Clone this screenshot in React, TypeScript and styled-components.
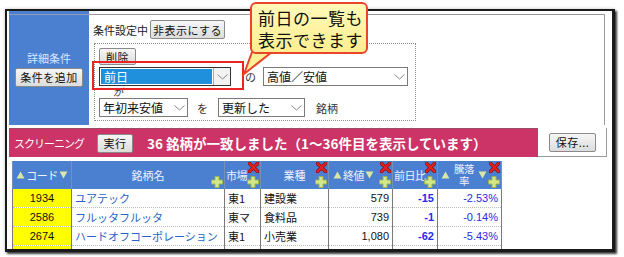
import React from "react";
import styled, { createGlobalStyle } from "styled-components";

const Global = createGlobalStyle`
  html, body { margin: 0; padding: 0; background: #ffffff; }
  body { font-family: "Noto Sans CJK JP", "Noto Sans", sans-serif; }
`;

const JP = `"Noto Sans CJK JP", "Noto Sans", sans-serif`;
const NUM = `"Liberation Sans", Arial, sans-serif`;

const Page = styled.div`
  position: relative;
  width: 624px;
  height: 257px;
  overflow: hidden;
  padding: 9px 0 0 5px;
  box-sizing: border-box;
`;

const Frame = styled.div`
  width: 610px;
  height: 243px;
  box-sizing: border-box;
  border: 2px solid #1a1a1a;
  border-right-width: 3px;
  border-bottom-width: 3px;
  box-shadow: 2px 2px 2px rgba(0, 0, 0, 0.75), 0 0 3px rgba(0, 0, 0, 0.25);
  background: #fff;
  overflow: hidden;
  padding: 0 0 0 2px;
`;

const TopSection = styled.div`
  display: flex;
  width: 596px;
  height: 114px;
`;

const SidePanel = styled.div`
  width: 80px;
  background: linear-gradient(#4b7fd0 0 3px, #8c9ab4 3px 4px, #4b7fd0 4px);
  display: flex;
  flex-direction: column;
  align-items: center;
  justify-content: center;
  box-sizing: border-box;
  gap: 2px;
`;

const SideLabel = styled.div`
  color: #d6e6ff;
  font-size: 11px;
  line-height: 16px;
  font-family: ${JP};
`;

const Button = styled.button<{ $w?: number; $h?: number }>`
  display: inline-flex;
  align-items: center;
  justify-content: center;
  height: ${(p) => p.$h || 19}px;
  ${(p) => (p.$w ? `width: ${p.$w}px;` : "")}
  padding: 0;
  box-sizing: border-box;
  border: 1px solid #8a8a8a;
  border-radius: 2px;
  background: linear-gradient(#f6f6f6, #dcdcdc);
  font-family: ${JP};
  font-size: 11px;
  line-height: 14px;
  color: #111;
  letter-spacing: 0.5px;
  white-space: nowrap;
  flex: none;
`;

const MainCell = styled.div`
  flex: 1;
  margin-top: 3px;
  border-top: 1px solid #9a9a9a;
  border-right: 1px solid #9a9a9a;
  padding: 5px 0 0 4px;
  box-sizing: border-box;
  display: flex;
  flex-direction: column;
  align-items: flex-start;
`;

const StatusRow = styled.div`
  display: flex;
  align-items: center;
  gap: 2px;
  height: 19px;
  font-size: 11px;
  color: #222;
  font-family: ${JP};
`;

const ConditionBox = styled.div`
  margin: 4px 0 0 1px;
  width: 322px;
  height: 78px;
  box-sizing: border-box;
  border: 1px dotted #8c8c8c;
  padding: 4px 0 0 4px;
  display: flex;
  flex-direction: column;
  align-items: flex-start;
`;

const SelRow = styled.div<{ $mt: number }>`
  display: flex;
  align-items: center;
  margin-top: ${(p) => p.$mt}px;
`;

const Particle = styled.span<{ $ml: number; $mr: number }>`
  font-size: 11px;
  line-height: 14px;
  color: #333;
  margin: 0 ${(p) => p.$mr}px 0 ${(p) => p.$ml}px;
  font-family: ${JP};
`;

const SmallGa = styled.div`
  font-size: 10px;
  line-height: 10px;
  height: 10px;
  margin: 1px 0 1px 14px;
  color: #333;
  font-style: italic;
  font-family: ${JP};
`;

const SelectBox = styled.div<{ $w: number; $hl?: boolean }>`
  width: ${(p) => p.$w}px;
  height: 19px;
  box-sizing: border-box;
  border: 1px solid ${(p) => (p.$hl ? "#333" : "#7a7a7a")};
  background: #fff;
  display: flex;
  align-items: stretch;
  font-family: ${JP};
  font-size: 12px;
  color: #111;
  flex: none;
`;

const SelectText = styled.div<{ $hl?: boolean }>`
  flex: 1;
  padding-left: 3px;
  background: ${(p) => (p.$hl ? "#1e90dc" : "transparent")};
  color: ${(p) => (p.$hl ? "#fff" : "#111")};
  margin: ${(p) => (p.$hl ? "1px" : "0")};
  line-height: ${(p) => (p.$hl ? "15px" : "17px")};
  white-space: nowrap;
`;

const SelectArrow = styled.div<{ $hl?: boolean }>`
  width: 16px;
  display: flex;
  align-items: center;
  justify-content: center;
  ${(p) => (p.$hl ? "border-left: 1px solid #aaa; background: #f2f2f2;" : "")}
`;

const Chevron = () => (
  <svg width="11" height="6" viewBox="0 0 11 6">
    <path d="M0.5 0.5 L5.5 5 L10.5 0.5" fill="none" stroke="#888" strokeWidth="1" />
  </svg>
);

const Select = ({ w, text, hl }: { w: number; text: string; hl?: boolean }) => (
  <SelectBox $w={w} $hl={hl}>
    <SelectText $hl={hl}>{text}</SelectText>
    <SelectArrow $hl={hl}>
      <Chevron />
    </SelectArrow>
  </SelectBox>
);

const BarRow = styled.div`
  display: flex;
  width: 598px;
  height: 29px;
  margin-top: 3px;
`;

const PinkBar = styled.div`
  width: 529px;
  background: #cc3366;
  border-top: 1px solid #9a4a6a;
  box-sizing: border-box;
  display: flex;
  align-items: center;
  padding-left: 5px;
`;

const PinkLabel = styled.span`
  color: #fff;
  font-size: 11px;
  letter-spacing: -1px;
  font-family: ${JP};
  width: 83px;
  white-space: nowrap;
`;

const Message = styled.span`
  color: #fff;
  font-size: 13.5px;
  font-weight: bold;
  font-family: ${JP};
  margin-left: 14px;
  white-space: nowrap;
`;

const SaveArea = styled.div`
  flex: 1;
  border-right: 1px solid #9a9a9a;
  border-bottom: 1px solid #9a9a9a;
  display: flex;
  align-items: center;
  padding-left: 11px;
  box-sizing: border-box;
`;

const Table = styled.table`
  margin: 4px 0 0 3px;
  border-collapse: collapse;
  table-layout: fixed;
  width: 482px;
`;

const Th = styled.th<{ $w: number; $align?: string }>`
  width: ${(p) => p.$w}px;
  height: 28px;
  padding: 0;
  background: #4b7fd0;
  border-left: 1px solid #7d8fb0;
  border-right: 1px solid #7d8fb0;
  color: #eef2ff;
  font-weight: normal;
  font-size: 11px;
  font-family: ${JP};
  position: relative;
  text-align: ${(p) => p.$align || "center"};
  vertical-align: middle;
  white-space: nowrap;
`;

const HeadInner = styled.div<{ $justify?: string; $pl?: number }>`
  display: flex;
  align-items: center;
  justify-content: ${(p) => p.$justify || "center"};
  gap: 1px;
  line-height: 13px;
  padding-left: ${(p) => (p.$pl ?? 2)}px;
  letter-spacing: -0.5px;
`;

const Stack = styled.div`
  display: flex;
  flex-direction: column;
  align-items: center;
  line-height: 12px;
  margin: 0 3px;
  font-size: 10.5px;
`;

const IconX = styled.span`
  position: absolute;
  top: 1px;
  right: 1px;
  line-height: 0;
`;

const IconPlus = styled.span`
  position: absolute;
  bottom: 1px;
  right: 1px;
  line-height: 0;
`;

const Td = styled.td<{ $align?: string; $color?: string; $bg?: string; $bold?: boolean; $num?: boolean }>`
  height: 18px;
  padding: 0 3px;
  border-left: 1px solid #7a7a7a;
  border-right: 1px solid #7a7a7a;
  border-bottom: 1px dotted #bdbdbd;
  background: ${(p) => p.$bg || "#fff"};
  text-align: ${(p) => p.$align || "left"};
  color: ${(p) => p.$color || "#111"};
  font-family: ${(p) => (p.$num ? NUM : JP)};
  font-size: 11px;
  line-height: 14px;
  font-weight: ${(p) => (p.$bold ? "bold" : "normal")};
  white-space: nowrap;
  overflow: hidden;
`;

const Callout = styled.div`
  position: absolute;
  left: 250px;
  top: 2px;
  width: 118px;
  height: 52px;
  box-sizing: border-box;
  border: 2px solid #e8452c;
  border-radius: 6px;
  background: linear-gradient(#fff9b8, #ffee90);
  font-family: ${JP};
  font-size: 17px;
  line-height: 22px;
  color: #111;
  padding: 3px 0 0 6px;
  letter-spacing: 0.5px;
`;

const CalloutTail = styled.svg`
  position: absolute;
  left: 240px;
  top: 50px;
`;

const Highlight = styled.div`
  position: absolute;
  left: 92px;
  top: 61px;
  width: 152px;
  height: 29px;
  box-sizing: border-box;
  border: 2px solid #e82424;
`;

const XIcon = () => (
  <svg width="11" height="11" viewBox="0 0 11 11">
    <path d="M1.5 1.5 L9.5 9.5 M9.5 1.5 L1.5 9.5" stroke="#7a1010" strokeWidth="3.6" strokeLinecap="round" />
    <path d="M1.5 1.5 L9.5 9.5 M9.5 1.5 L1.5 9.5" stroke="#e42020" strokeWidth="2.4" strokeLinecap="round" />
  </svg>
);

const PlusIcon = () => (
  <svg width="12" height="12" viewBox="0 0 12 12">
    <path d="M4 0.5 H8 V4 H11.5 V8 H8 V11.5 H4 V8 H0.5 V4 H4 Z" fill="#d2e68a" stroke="#9cb24a" strokeWidth="1" />
  </svg>
);

const Tri = ({ up }: { up?: boolean }) => (
  <svg width="9" height="8" viewBox="0 0 9 8">
    {up ? (
      <path d="M4.5 0.5 L8.5 7.5 L0.5 7.5 Z" fill="#d8e6a6" />
    ) : (
      <path d="M0.5 0.5 L8.5 0.5 L4.5 7.5 Z" fill="#d8e6a6" />
    )}
  </svg>
);

const rows = [
  { code: "1934", name: "ユアテック", mkt: "東1", ind: "建設業", close: "579", chg: "-15", pct: "-2.53%" },
  { code: "2586", name: "フルッタフルッタ", mkt: "東マ", ind: "食料品", close: "739", chg: "-1", pct: "-0.14%" },
  { code: "2674", name: "ハードオフコーポレーション", mkt: "東1", ind: "小売業", close: "1,080", chg: "-62", pct: "-5.43%" },
  { code: "", name: "", mkt: "", ind: "", close: "", chg: "", pct: "" },
];

export default function App() {
  return (
    <>
      <Global />
      <Page>
        <Frame>
          <TopSection>
            <SidePanel>
              <SideLabel>詳細条件</SideLabel>
              <Button $w={68}>条件を追加</Button>
            </SidePanel>
            <MainCell>
              <StatusRow>
                <span>条件設定中</span>
                <Button $w={75}>非表示にする</Button>
              </StatusRow>
              <ConditionBox>
                <Button $w={37} $h={17}>削除</Button>
                <SelRow $mt={2}>
                  <Select w={132} text="前日" hl />
                  <Particle $ml={14} $mr={7}>の</Particle>
                  <Select w={145} text="高値／安値" />
                </SelRow>
                <SmallGa>が</SmallGa>
                <SelRow $mt={0}>
                  <Select w={89} text="年初来安値" />
                  <Particle $ml={9} $mr={10}>を</Particle>
                  <Select w={87} text="更新した" />
                  <Particle $ml={11} $mr={0}>銘柄</Particle>
                </SelRow>
              </ConditionBox>
            </MainCell>
          </TopSection>
          <BarRow>
            <PinkBar>
              <PinkLabel>スクリーニング</PinkLabel>
              <Button $w={36}>実行</Button>
              <Message>36 銘柄が一致しました（1～36件目を表示しています）</Message>
            </PinkBar>
            <SaveArea>
              <Button $w={47}>保存...</Button>
            </SaveArea>
          </BarRow>
          <Table>
            <thead>
              <tr>
                <Th $w={58}>
                  <HeadInner $pl={0}>
                    <Tri up />
                    <span>コード</span>
                    <Tri />
                  </HeadInner>
                </Th>
                <Th $w={152}>
                  銘柄名
                  <IconPlus><PlusIcon /></IconPlus>
                </Th>
                <Th $w={35} $align="left">
                  <HeadInner $justify="flex-start" $pl={1}>市場</HeadInner>
                  <IconX><XIcon /></IconX>
                  <IconPlus><PlusIcon /></IconPlus>
                </Th>
                <Th $w={67}>
                  業種
                  <IconX><XIcon /></IconX>
                  <IconPlus><PlusIcon /></IconPlus>
                </Th>
                <Th $w={63}>
                  <HeadInner $justify="flex-start" $pl={4}>
                    <Tri up />
                    <span>終値</span>
                    <Tri />
                  </HeadInner>
                  <IconX><XIcon /></IconX>
                  <IconPlus><PlusIcon /></IconPlus>
                </Th>
                <Th $w={44} $align="left">
                  <HeadInner $justify="flex-start" $pl={1}>前日比</HeadInner>
                  <IconX><XIcon /></IconX>
                  <IconPlus><PlusIcon /></IconPlus>
                </Th>
                <Th $w={63}>
                  <HeadInner $justify="flex-start" $pl={3}>
                    <Tri up />
                    <Stack>
                      <span>騰落</span>
                      <span>率</span>
                    </Stack>
                    <Tri />
                  </HeadInner>
                  <IconX><XIcon /></IconX>
                  <IconPlus><PlusIcon /></IconPlus>
                </Th>
              </tr>
            </thead>
            <tbody>
              {rows.map((r, i) => (
                <tr key={i}>
                  <Td $align="center" $bg="#ffff00" $num>{r.code}</Td>
                  <Td $color="#2a63c8">{r.name}</Td>
                  <Td>{r.mkt}</Td>
                  <Td>{r.ind}</Td>
                  <Td $align="right" $num>{r.close}</Td>
                  <Td $align="right" $color="#2a2ae8" $bold $num>{r.chg}</Td>
                  <Td $align="right" $color="#2a2ae8" $num>{r.pct}</Td>
                </tr>
              ))}
            </tbody>
          </Table>
        </Frame>
        <Highlight />
        <CalloutTail width="40" height="30" viewBox="0 0 40 30">
          <path d="M12 2 L4 24 L32 2" fill="#ffef96" stroke="#e8452c" strokeWidth="2" strokeLinejoin="miter" />
          <path d="M13 0 L31 0" stroke="#ffef96" strokeWidth="4" />
        </CalloutTail>
        <Callout>
          前日の一覧も
          <br />
          表示できます
        </Callout>
      </Page>
    </>
  );
}
